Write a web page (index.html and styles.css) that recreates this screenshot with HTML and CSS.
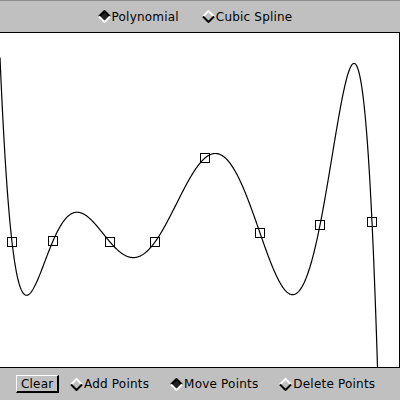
FILE: index.html
```html
<!DOCTYPE html>
<html>
<head>
    <title>Curve Fitting</title>
    <link rel="stylesheet" href="styles.css">
</head>
<body>
<div class="bar top-bar">
    <label class="radio checked"><svg class="diamond" width="13" height="13" viewBox="0 0 13 13"><polygon class="fill" points="6.5,1 12,6.5 6.5,12 1,6.5"/><polyline class="upper" points="1,6.5 6.5,1 12,6.5"/><polyline class="lower" points="1,6.5 6.5,12 12,6.5"/></svg>Polynomial</label>
    <label class="radio"><svg class="diamond" width="13" height="13" viewBox="0 0 13 13"><polygon class="fill" points="6.5,1 12,6.5 6.5,12 1,6.5"/><polyline class="upper" points="1,6.5 6.5,1 12,6.5"/><polyline class="lower" points="1,6.5 6.5,12 12,6.5"/></svg>Cubic Spline</label>
</div>

<div class="canvas">
    <svg id="plot" width="399" height="334" viewBox="0 33 399 334">
        <path id="curve" d=""/>
        <g id="points"></g>
    </svg>
</div>

<div class="bar bottom-bar">
    <button class="clear">Clear</button>
    <label class="radio"><svg class="diamond" width="13" height="13" viewBox="0 0 13 13"><polygon class="fill" points="6.5,1 12,6.5 6.5,12 1,6.5"/><polyline class="upper" points="1,6.5 6.5,1 12,6.5"/><polyline class="lower" points="1,6.5 6.5,12 12,6.5"/></svg>Add Points</label>
    <label class="radio checked"><svg class="diamond" width="13" height="13" viewBox="0 0 13 13"><polygon class="fill" points="6.5,1 12,6.5 6.5,12 1,6.5"/><polyline class="upper" points="1,6.5 6.5,1 12,6.5"/><polyline class="lower" points="1,6.5 6.5,12 12,6.5"/></svg>Move Points</label>
    <label class="radio"><svg class="diamond" width="13" height="13" viewBox="0 0 13 13"><polygon class="fill" points="6.5,1 12,6.5 6.5,12 1,6.5"/><polyline class="upper" points="1,6.5 6.5,1 12,6.5"/><polyline class="lower" points="1,6.5 6.5,12 12,6.5"/></svg>Delete Points</label>
</div>

<script src="script.js"></script>
</body>
</html>
```

FILE: styles.css
```css
body {
    margin: 0;
    background-color: #c0c0c0;
    font-family: "DejaVu Sans", Verdana, sans-serif;
    font-size: 12px;
    letter-spacing: 0.2px;
    color: #000;
}
.bar {
    display: flex;
    align-items: center;
    height: 32px;
    box-sizing: border-box;
}
.top-bar {
    justify-content: center;
    gap: 23px;
    border-top: 1px solid #8c8c8c;
    padding-right: 10px;
}
.bottom-bar {
    padding-left: 16px;
    gap: 21px;
}
.canvas {
    width: 400px;
    height: 336px;
    box-sizing: border-box;
    background-color: #fff;
    border-top: 1px solid #000;
    border-right: 1px solid #000;
    border-bottom: 1px solid #000;
}
#plot {
    display: block;
    overflow: hidden;
}
#curve {
    fill: none;
    stroke: #000;
    stroke-width: 1.2;
}
#points rect {
    fill: none;
    stroke: #000;
    stroke-width: 1;
}
.radio {
    display: flex;
    align-items: center;
    gap: 1px;
}
.diamond .fill {
    fill: #c0c0c0;
}
.diamond polyline {
    fill: none;
    stroke-width: 2;
}
.diamond .upper {
    stroke: #fff;
}
.diamond .lower {
    stroke: #000;
}
.radio.checked .fill {
    fill: #222;
}
.radio.checked .upper {
    stroke: #000;
}
.radio.checked .lower {
    stroke: #fff;
}
.clear {
    font-family: inherit;
    font-size: 12px;
    letter-spacing: 0.2px;
    background-color: #c0c0c0;
    padding: 0 4px;
    height: 18px;
    width: 43px;
    border-top: 1px solid #fff;
    border-left: 1px solid #fff;
    border-right: 2px solid #000;
    border-bottom: 2px solid #000;
    margin-right: -10px;
}
```

FILE: script.js
```js
const pts = [
    [12, 242], [53, 241], [110, 242], [155, 242],
    [205, 158], [260, 233], [320, 225], [372, 222]
];

function poly(x) {
    let sum = 0;
    for (let i = 0; i < pts.length; i++) {
        let term = pts[i][1];
        for (let j = 0; j < pts.length; j++) {
            if (j !== i) term *= (x - pts[j][0]) / (pts[i][0] - pts[j][0]);
        }
        sum += term;
    }
    return sum;
}

let d = '';
for (let x = 0; x <= 399; x += 0.5) {
    let y = Math.max(-500, Math.min(900, poly(x)));
    d += (x === 0 ? 'M' : 'L') + x + ',' + y.toFixed(2) + ' ';
}
document.querySelector('#curve').setAttribute('d', d);

const group = document.querySelector('#points');
pts.forEach(p => {
    const r = document.createElementNS('http://www.w3.org/2000/svg', 'rect');
    r.setAttribute('x', p[0] - 4.5);
    r.setAttribute('y', p[1] - 4.5);
    r.setAttribute('width', 9);
    r.setAttribute('height', 9);
    group.appendChild(r);
});
```
